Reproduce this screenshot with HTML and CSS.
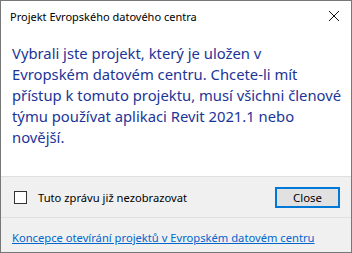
FILE: index.html
```html
<!DOCTYPE html>
<html lang="cs">
<head>
  <meta charset="UTF-8" />
  <title>Projekt Evropského datového centra</title>
  <link rel="stylesheet" href="styles.css">
</head>
<body>
  <div class="dialog">
    <div class="titlebar">
      <span class="title">Projekt Evropského datového centra</span>
      <svg class="close-x" width="12" height="12" viewBox="0 0 12 12">
        <path d="M1 1 L11 11 M11 1 L1 11" stroke="#111" stroke-width="1" fill="none"/>
      </svg>
    </div>

    <div class="content">
      <p class="message">Vybrali jste projekt, který je uložen v<br>
        Evropském datovém centru. Chcete-li mít<br>
        přístup k tomuto projektu, musí všichni členové<br>
        týmu používat aplikaci Revit 2021.1 nebo<br>
        novější.</p>
    </div>

    <div class="actions">
      <label class="check">
        <span class="box"></span>
        <span>Tuto zprávu již nezobrazovat</span>
      </label>
      <button class="button">Close</button>
    </div>

    <div class="footer">
      <a href="#" class="link">Koncepce otevírání projektů v Evropském datovém centru</a>
    </div>
  </div>
</body>
</html>
```

FILE: styles.css
```css
* {
  box-sizing: border-box;
}
body {
  margin: 0;
  font-family: 'Noto Sans', sans-serif;
  font-size: 11px;
  color: #000;
  background: #fff;
}
.dialog {
  width: 352px;
  height: 253px;
  border: 1px solid #777;
  display: flex;
  flex-direction: column;
  background: #fff;
}
.titlebar {
  height: 29px;
  display: flex;
  align-items: center;
  justify-content: space-between;
  padding: 1px 11px 0 9px;
}
.title {
  font-size: 11px;
}
.close-x {
  display: block;
}
.content {
  height: 146px;
  padding: 13px 8px 0 11px;
}
.message {
  margin: 0;
  font-size: 14.8px;
  line-height: 21px;
  color: #1c3598;
  white-space: nowrap;
}
.actions {
  height: 42px;
  background: #f0f0f0;
  border-top: 1px solid #dfdfdf;
  border-bottom: 1px solid #dfdfdf;
  display: flex;
  align-items: center;
  justify-content: space-between;
  padding: 0 11px 0 13px;
}
.check {
  display: flex;
  align-items: center;
  gap: 11px;
  font-size: 11.2px;
}
.box {
  width: 13px;
  height: 13px;
  border: 1px solid #333;
  background: #fff;
}
.button {
  width: 65px;
  height: 21px;
  font-family: inherit;
  font-size: 11.4px;
  background: #e1e1e1;
  border: 2px solid #0078d7;
  padding: 0;
  color: #000;
}
.footer {
  flex: 1;
  background: #f0f0f0;
  padding: 12px 11px 0 11px;
}
.link {
  font-size: 11.2px;
  color: #0066cc;
  text-decoration: underline;
}
```
